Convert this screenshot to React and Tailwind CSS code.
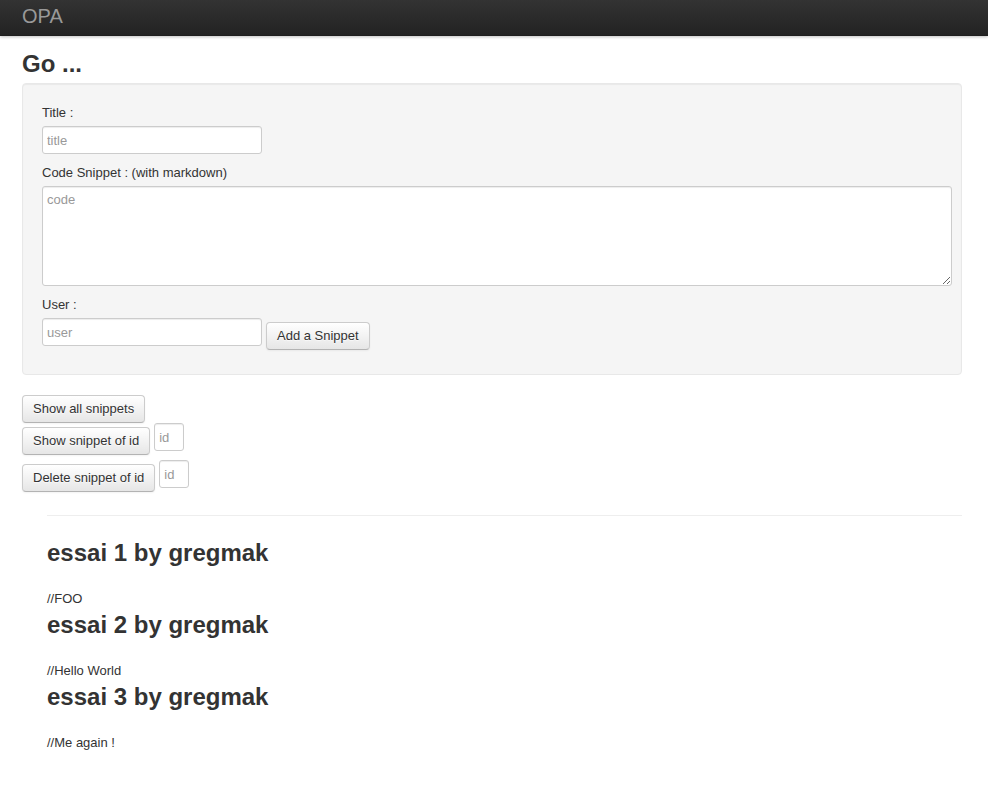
const inputCls =
  "block h-[28px] rounded-[3px] border border-[#ccc] bg-white px-[4px] text-[13px] leading-[18px] text-[#555] placeholder-[#999] shadow-[inset_0_1px_1px_rgba(0,0,0,0.075)] focus:outline-none"

const Btn = ({ children, className = "" }) => (
  <button
    type="button"
    className={
      "h-[28px] shrink-0 rounded-[4px] border border-[#ccc] border-b-[#b3b3b3] bg-gradient-to-b from-white to-[#e6e6e6] px-[10px] text-[13px] leading-[18px] text-[#333] [text-shadow:0_1px_1px_rgba(255,255,255,0.75)] shadow-[inset_0_1px_0_rgba(255,255,255,0.2),0_1px_2px_rgba(0,0,0,0.05)] " +
      className
    }
  >
    {children}
  </button>
)

const snippets = [
  { title: "essai 1", user: "gregmak", code: "//FOO" },
  { title: "essai 2", user: "gregmak", code: "//Hello World" },
  { title: "essai 3", user: "gregmak", code: "//Me again !" },
]

export default function App() {
  return (
    <div className="min-h-[786px] bg-white font-['Liberation_Sans',Arial,sans-serif] text-[13px] leading-[18px] text-[#333]">
      {/* navbar */}
      <div className="h-[36px] bg-gradient-to-b from-[#333] to-[#222] shadow-[0_1px_3px_rgba(0,0,0,0.25),inset_0_-1px_0_rgba(0,0,0,0.1)]">
        <div className="ml-[22px] pt-[6px] text-[20px] leading-[20px] text-[#999]">OPA</div>
      </div>

      <div className="ml-[22px] w-[940px]">
        <h2 className="mt-[10px] h-[36px] text-[24px] font-bold leading-[36px]">Go ...</h2>

        {/* form well */}
        <div className="mt-[1px] mb-[20px] rounded-[4px] border border-[#e8e8e8] bg-[#f5f5f5] p-[19px] shadow-[inset_0_1px_1px_rgba(0,0,0,0.05)]">
          <label className="mb-[5px] block pt-[1px] leading-[17px]">Title :</label>
          <input className={inputCls + " mb-[9px] w-[220px]"} placeholder="title" />

          <label className="mb-[5px] block pt-[1px] leading-[17px]">Code Snippet : (with markdown)</label>
          <textarea className={inputCls + " mb-[9px] h-[100px] w-[910px] py-[4px]"} placeholder="code" />

          <label className="mb-[5px] block pt-[1px] leading-[17px]">User :</label>
          <div className="flex items-start gap-[4px]">
            <input className={inputCls + " mb-[9px] w-[220px]"} placeholder="user" />
            <Btn className="mt-[4px]">Add a Snippet</Btn>
          </div>
        </div>

        {/* actions */}
        <Btn className="block">Show all snippets</Btn>
        <div className="flex items-start gap-[4px]">
          <Btn className="mt-[4px]">Show snippet of id</Btn>
          <input className={inputCls + " mb-[9px] w-[30px]"} placeholder="id" />
        </div>
        <div className="flex items-start gap-[4px]">
          <Btn className="mt-[4px]">Delete snippet of id</Btn>
          <input className={inputCls + " mb-[9px] w-[30px]"} placeholder="id" />
        </div>

        {/* list */}
        <div className="ml-[25px]">
          <hr className="mt-[18px] mb-[18px] border-0 border-t border-b border-t-[#eee] border-b-white" />
          {snippets.map((s, i) => (
            <div key={i}>
              <h2 className="h-[36px] text-[24px] font-bold leading-[36px]">
                {s.title} by {s.user}
              </h2>
              <p className="mt-[18px] pt-[1px] leading-[17px]">{s.code}</p>
            </div>
          ))}
        </div>
      </div>
    </div>
  )
}
